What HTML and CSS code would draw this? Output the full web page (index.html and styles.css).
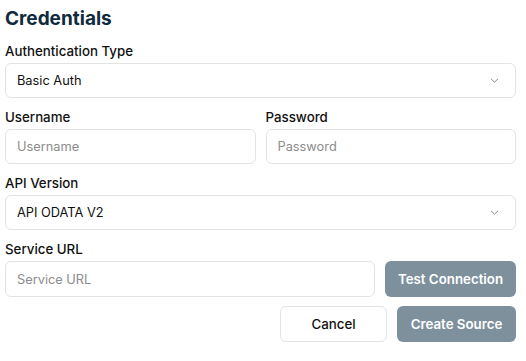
FILE: index.html
```html
<!DOCTYPE html>
<html lang="en">
<head>
    <meta charset="UTF-8">
    <meta name="viewport" content="width=device-width, initial-scale=1.0">
    <title>Credentials</title>
    <link rel="stylesheet" href="styles.css">
</head>
<body>
    <div class="credentials-form">
        <h2 class="form-title">Credentials</h2>

        <div class="field">
            <label class="field-label">Authentication Type</label>
            <div class="select-box">
                <span>Basic Auth</span>
                <svg class="chevron" width="9" height="5" viewBox="0 0 9 5"><path d="M1 0.8l3.5 3.4 3.5-3.4" fill="none" stroke="#888" stroke-width="1"/></svg>
            </div>
        </div>

        <div class="field-row">
            <div class="field">
                <label class="field-label">Username</label>
                <input class="text-input" type="text" placeholder="Username">
            </div>
            <div class="field">
                <label class="field-label">Password</label>
                <input class="text-input" type="password" placeholder="Password">
            </div>
        </div>

        <div class="field">
            <label class="field-label">API Version</label>
            <div class="select-box">
                <span>API ODATA V2</span>
                <svg class="chevron" width="9" height="5" viewBox="0 0 9 5"><path d="M1 0.8l3.5 3.4 3.5-3.4" fill="none" stroke="#888" stroke-width="1"/></svg>
            </div>
        </div>

        <div class="field">
            <label class="field-label">Service URL</label>
            <div class="url-row">
                <input class="text-input url-input" type="text" placeholder="Service URL">
                <button class="btn btn-primary test-btn">Test Connection</button>
            </div>
        </div>

        <div class="form-actions">
            <button class="btn btn-outline cancel-btn">Cancel</button>
            <button class="btn btn-primary create-btn">Create Source</button>
        </div>
    </div>
</body>
</html>
```

FILE: styles.css
```css
* {
    margin: 0;
    padding: 0;
    box-sizing: border-box;
    font-family: Inter, 'Open Sans', Arial, sans-serif;
}

body {
    background-color: #ffffff;
    width: 526px;
    height: 361px;
    overflow: hidden;
}

.credentials-form {
    padding: 8px 10px 0 5px;
}

.form-title {
    font-size: 19px;
    font-weight: 700;
    color: #0f2b3d;
    line-height: 22px;
    margin-bottom: 12px;
}

.field {
    display: flex;
    flex-direction: column;
    margin-bottom: 10px;
}

.field-label {
    font-size: 13.3px;
    font-weight: 500;
    color: #111;
    line-height: 18px;
    margin-bottom: 3px;
}

.select-box,
.text-input {
    height: 35px;
    border: 1px solid #e3e3e3;
    border-radius: 6px;
    padding: 0 11px;
    font-size: 12.8px;
    color: #111;
    background: #fff;
}

.select-box {
    display: flex;
    align-items: center;
    justify-content: space-between;
    padding-right: 16px;
}

.text-input {
    width: 100%;
    outline: none;
}

.text-input::placeholder {
    color: #8c8c8c;
}

.field-row {
    display: grid;
    grid-template-columns: 1fr 1fr;
    gap: 10px;
}

.url-row {
    display: flex;
    gap: 10px;
}

.url-input {
    flex: 1;
    height: 36px;
}

.btn {
    height: 36px;
    border-radius: 6px;
    font-size: 13.3px;
    font-weight: 600;
    cursor: pointer;
}

.btn-primary {
    background-color: #7e909c;
    color: #fff;
    border: none;
}

.btn-outline {
    background: #fff;
    color: #111;
    border: 1px solid #e3e3e3;
    font-weight: 500;
}

.test-btn {
    width: 131px;
}

.form-actions {
    display: flex;
    justify-content: flex-end;
    gap: 10px;
    margin-top: -1px;
}

.cancel-btn {
    width: 107px;
}

.create-btn {
    width: 119px;
}
```
